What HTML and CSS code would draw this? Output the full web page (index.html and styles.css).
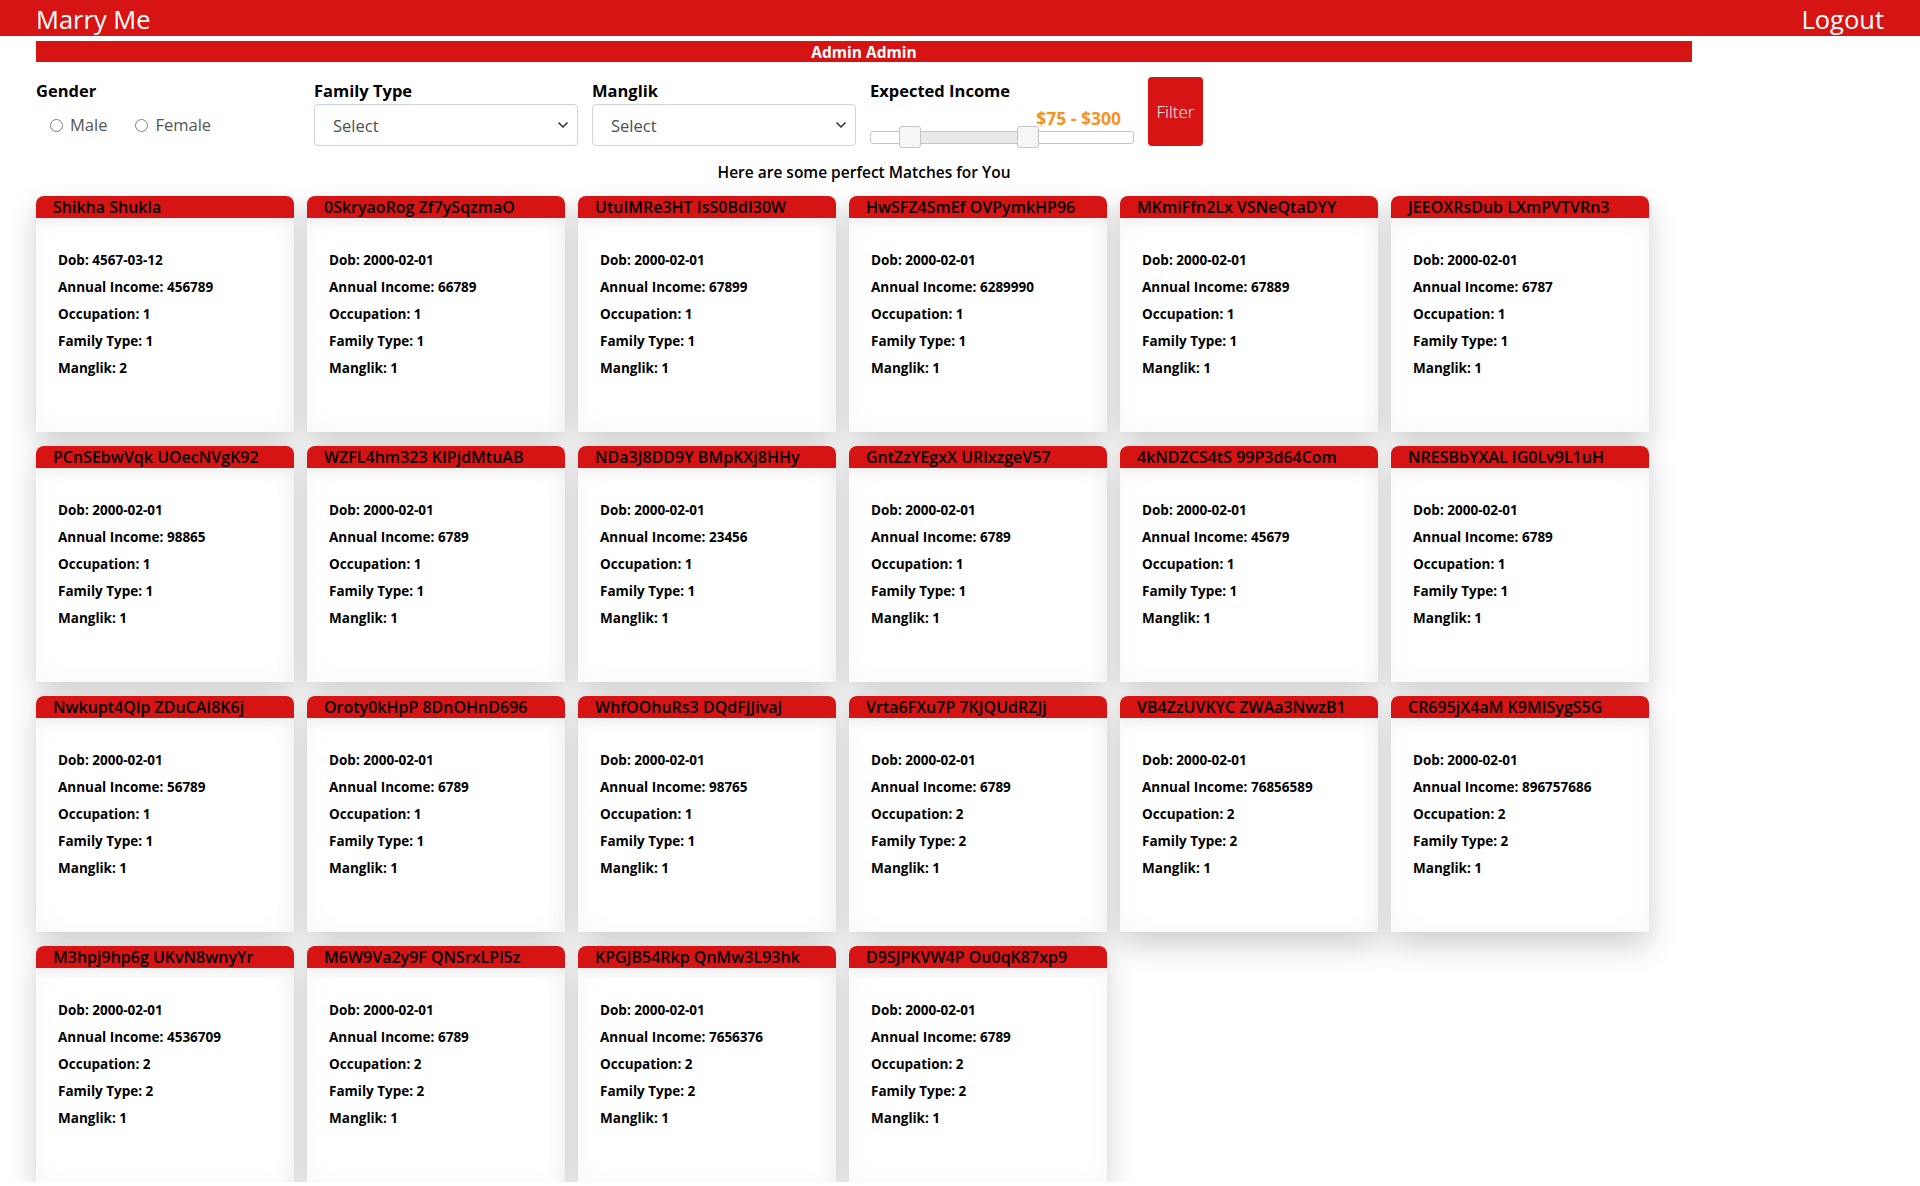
FILE: index.html
```html
<!DOCTYPE html>
<html lang="en">
<head>
<meta charset="utf-8">
<title>Marry Me</title>
<link rel="stylesheet" href="styles.css">
</head>
<body>
<header class="topbar">
  <span class="brand">Marry Me</span>
  <a class="logout" href="#">Logout</a>
</header>
<main class="page">
  <div class="admin-bar">Admin Admin</div>
  <form class="filters">
    <div class="fcol">
      <div class="flabel">Gender</div>
      <div class="radios">
        <label class="radio"><span class="dot"></span>Male</label>
        <label class="radio"><span class="dot"></span>Female</label>
      </div>
    </div>
    <div class="fcol">
      <div class="flabel">Family Type</div>
      <div class="select"><span>Select</span><svg width="10" height="6" viewBox="0 0 10 6"><path d="M1 1l4 4 4-4" fill="none" stroke="#343a40" stroke-width="1.7" stroke-linecap="round" stroke-linejoin="round"/></svg></div>
    </div>
    <div class="fcol">
      <div class="flabel">Manglik</div>
      <div class="select"><span>Select</span><svg width="10" height="6" viewBox="0 0 10 6"><path d="M1 1l4 4 4-4" fill="none" stroke="#343a40" stroke-width="1.7" stroke-linecap="round" stroke-linejoin="round"/></svg></div>
    </div>
    <div class="fcol">
      <div class="flabel">Expected Income</div>
      <div class="range-value">$75 - $300</div>
      <div class="slider">
        <div class="slider-range" style="left:15%;width:45%"></div>
        <span class="handle" style="left:15%"></span>
        <span class="handle" style="left:60%"></span>
      </div>
    </div>
    <button class="filter-btn" type="button">Filter</button>
  </form>
  <h2 class="matches-title">Here are some perfect Matches for You</h2>
  <div class="grid">
    <div class="card"><div class="card-head">Shikha Shukla</div><div class="card-body"><p>Dob: 4567-03-12</p><p>Annual Income: 456789</p><p>Occupation: 1</p><p>Family Type: 1</p><p>Manglik: 2</p></div></div>
    <div class="card"><div class="card-head">0SkryaoRog Zf7ySqzmaO</div><div class="card-body"><p>Dob: 2000-02-01</p><p>Annual Income: 66789</p><p>Occupation: 1</p><p>Family Type: 1</p><p>Manglik: 1</p></div></div>
    <div class="card"><div class="card-head">UtuIMRe3HT IsS0BdI30W</div><div class="card-body"><p>Dob: 2000-02-01</p><p>Annual Income: 67899</p><p>Occupation: 1</p><p>Family Type: 1</p><p>Manglik: 1</p></div></div>
    <div class="card"><div class="card-head">HwSFZ4SmEf OVPymkHP96</div><div class="card-body"><p>Dob: 2000-02-01</p><p>Annual Income: 6289990</p><p>Occupation: 1</p><p>Family Type: 1</p><p>Manglik: 1</p></div></div>
    <div class="card"><div class="card-head">MKmiFfn2Lx VSNeQtaDYY</div><div class="card-body"><p>Dob: 2000-02-01</p><p>Annual Income: 67889</p><p>Occupation: 1</p><p>Family Type: 1</p><p>Manglik: 1</p></div></div>
    <div class="card"><div class="card-head">JEEOXRsDub LXmPVTVRn3</div><div class="card-body"><p>Dob: 2000-02-01</p><p>Annual Income: 6787</p><p>Occupation: 1</p><p>Family Type: 1</p><p>Manglik: 1</p></div></div>

    <div class="card"><div class="card-head">PCnSEbwVqk UOecNVgK92</div><div class="card-body"><p>Dob: 2000-02-01</p><p>Annual Income: 98865</p><p>Occupation: 1</p><p>Family Type: 1</p><p>Manglik: 1</p></div></div>
    <div class="card"><div class="card-head">WZFL4hm323 KIPjdMtuAB</div><div class="card-body"><p>Dob: 2000-02-01</p><p>Annual Income: 6789</p><p>Occupation: 1</p><p>Family Type: 1</p><p>Manglik: 1</p></div></div>
    <div class="card"><div class="card-head">NDa3J8DD9Y BMpKXj8HHy</div><div class="card-body"><p>Dob: 2000-02-01</p><p>Annual Income: 23456</p><p>Occupation: 1</p><p>Family Type: 1</p><p>Manglik: 1</p></div></div>
    <div class="card"><div class="card-head">GntZzYEgxX URlxzgeV57</div><div class="card-body"><p>Dob: 2000-02-01</p><p>Annual Income: 6789</p><p>Occupation: 1</p><p>Family Type: 1</p><p>Manglik: 1</p></div></div>
    <div class="card"><div class="card-head">4kNDZCS4tS 99P3d64Com</div><div class="card-body"><p>Dob: 2000-02-01</p><p>Annual Income: 45679</p><p>Occupation: 1</p><p>Family Type: 1</p><p>Manglik: 1</p></div></div>
    <div class="card"><div class="card-head">NRESBbYXAL IG0Lv9L1uH</div><div class="card-body"><p>Dob: 2000-02-01</p><p>Annual Income: 6789</p><p>Occupation: 1</p><p>Family Type: 1</p><p>Manglik: 1</p></div></div>

    <div class="card"><div class="card-head">Nwkupt4Qlp ZDuCAI8K6j</div><div class="card-body"><p>Dob: 2000-02-01</p><p>Annual Income: 56789</p><p>Occupation: 1</p><p>Family Type: 1</p><p>Manglik: 1</p></div></div>
    <div class="card"><div class="card-head">Oroty0kHpP 8DnOHnD696</div><div class="card-body"><p>Dob: 2000-02-01</p><p>Annual Income: 6789</p><p>Occupation: 1</p><p>Family Type: 1</p><p>Manglik: 1</p></div></div>
    <div class="card"><div class="card-head">WhfOOhuRs3 DQdFJJivaJ</div><div class="card-body"><p>Dob: 2000-02-01</p><p>Annual Income: 98765</p><p>Occupation: 1</p><p>Family Type: 1</p><p>Manglik: 1</p></div></div>
    <div class="card"><div class="card-head">Vrta6FXu7P 7KJQUdRZJj</div><div class="card-body"><p>Dob: 2000-02-01</p><p>Annual Income: 6789</p><p>Occupation: 2</p><p>Family Type: 2</p><p>Manglik: 1</p></div></div>
    <div class="card"><div class="card-head">VB4ZzUVKYC ZWAa3NwzB1</div><div class="card-body"><p>Dob: 2000-02-01</p><p>Annual Income: 76856589</p><p>Occupation: 2</p><p>Family Type: 2</p><p>Manglik: 1</p></div></div>
    <div class="card"><div class="card-head">CR695jX4aM K9MISygS5G</div><div class="card-body"><p>Dob: 2000-02-01</p><p>Annual Income: 896757686</p><p>Occupation: 2</p><p>Family Type: 2</p><p>Manglik: 1</p></div></div>

    <div class="card"><div class="card-head">M3hpj9hp6g UKvN8wnyYr</div><div class="card-body"><p>Dob: 2000-02-01</p><p>Annual Income: 4536709</p><p>Occupation: 2</p><p>Family Type: 2</p><p>Manglik: 1</p></div></div>
    <div class="card"><div class="card-head">M6W9Va2y9F QNSrxLPl5z</div><div class="card-body"><p>Dob: 2000-02-01</p><p>Annual Income: 6789</p><p>Occupation: 2</p><p>Family Type: 2</p><p>Manglik: 1</p></div></div>
    <div class="card"><div class="card-head">KPGJB54Rkp QnMw3L93hk</div><div class="card-body"><p>Dob: 2000-02-01</p><p>Annual Income: 7656376</p><p>Occupation: 2</p><p>Family Type: 2</p><p>Manglik: 1</p></div></div>
    <div class="card"><div class="card-head">D9SJPKVW4P Ou0qK87xp9</div><div class="card-body"><p>Dob: 2000-02-01</p><p>Annual Income: 6789</p><p>Occupation: 2</p><p>Family Type: 2</p><p>Manglik: 1</p></div></div>
  </div>
</main>
</body>
</html>
```

FILE: styles.css
```css
* { box-sizing: border-box; }

html, body {
  margin: 0;
  padding: 0;
  background: #fff;
  font-family: "Open Sans", "Noto Sans", sans-serif;
  color: #000;
}

.topbar {
  display: flex;
  justify-content: space-between;
  align-items: flex-start;
  height: 36px;
  padding: 2px 36px 0 36px;
  background: #d71414;
  color: #fff;
  font-size: 25.5px;
  line-height: 34px;
  overflow: hidden;
}

.brand { font-weight: 400; }

.logout {
  color: #fff;
  text-decoration: none;
  font-weight: 400;
}

.page {
  width: 1656px;
  margin-left: 36px;
}

.admin-bar {
  margin-top: 5px;
  height: 21px;
  background: #d71414;
  color: #fff;
  text-align: center;
  font-size: 15.5px;
  font-weight: 700;
  line-height: 22px;
}

.filters {
  display: flex;
  align-items: flex-end;
  gap: 14px;
  margin: 15px 0 0;
}

.fcol {
  width: 264px;
  display: flex;
  flex-direction: column;
}

.flabel {
  font-size: 16.5px;
  font-weight: 700;
  line-height: 22px;
  margin-bottom: 2px;
}

.radios {
  display: flex;
  align-items: center;
  height: 42px;
  padding-left: 14px;
  gap: 28px;
}

.radio {
  display: flex;
  align-items: center;
  gap: 7px;
  font-size: 16.5px;
  color: #555;
  line-height: 22px;
}

.dot {
  width: 13px;
  height: 13px;
  border: 1px solid #808080;
  border-radius: 50%;
  background: #fff;
}

.select {
  height: 42px;
  border: 1px solid #ced4da;
  border-radius: 4px;
  display: flex;
  align-items: center;
  justify-content: space-between;
  padding: 0 9px 0 18px;
  font-size: 16.5px;
  color: #495057;
  background: #fff;
}

.select svg { display: block; }

.range-value {
  margin-top: 4px;
  line-height: 20px;
  font-size: 17.5px;
  font-weight: 700;
  color: #f6931f;
  text-align: right;
  padding-right: 13px;
}

.slider {
  position: relative;
  margin: 3px 0 2px;
  height: 13px;
  border: 1px solid #c5c5c5;
  border-radius: 3px;
  background: #fff;
}

.slider-range {
  position: absolute;
  top: 0;
  bottom: 0;
  background: #e9e9e9;
}

.handle {
  position: absolute;
  top: -6px;
  width: 22px;
  height: 22px;
  margin-left: -11px;
  border: 1px solid #c5c5c5;
  border-radius: 3px;
  background: #f6f6f6;
}

.filter-btn {
  width: 55px;
  height: 69px;
  border: 0;
  border-radius: 4px;
  background: #d71414;
  color: #fff;
  font-family: inherit;
  font-size: 17px;
  font-weight: 300;
  padding: 0;
}

.matches-title {
  margin: 15px 0 13px;
  text-align: center;
  font-size: 15.5px;
  font-weight: 600;
  line-height: 22px;
}

.grid {
  display: grid;
  grid-template-columns: repeat(6, 258px);
  column-gap: 13px;
  row-gap: 14px;
}

.card {
  height: 236px;
  display: flex;
  flex-direction: column;
  background: #fff;
  border-radius: 8px 8px 0 0;
  box-shadow: 0 14px 30px rgba(0, 0, 0, 0.19);
}

.card-head {
  position: relative;
  height: 22px;
  padding-left: 17px;
  background: #d71414;
  border-radius: 8px 8px 0 0;
  font-size: 16px;
  font-weight: 600;
  line-height: 22px;
  white-space: nowrap;
  overflow: hidden;
  box-shadow: 0 4px 12px rgba(0, 0, 0, 0.06);
}

.card-body {
  flex: 1;
  padding: 29px 22px 0;
  box-shadow: inset 0 0 26px rgba(0, 0, 0, 0.03);
}

.card-body p {
  margin: 0;
  font-size: 13.5px;
  font-weight: 700;
  line-height: 27px;
}
```
